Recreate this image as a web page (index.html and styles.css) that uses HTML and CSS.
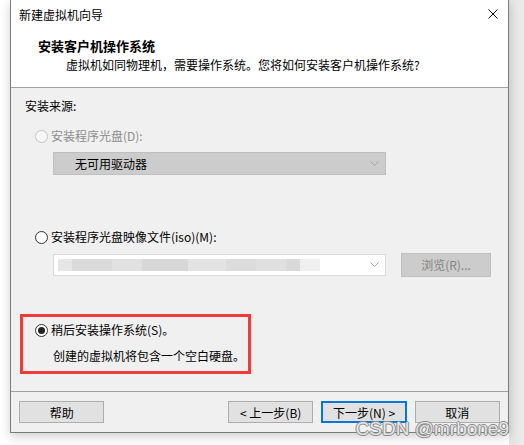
FILE: index.html
```html
<!DOCTYPE html>
<html lang="zh-CN">
<head>
<meta charset="utf-8">
<link rel="stylesheet" href="styles.css">
</head>
<body>
<div class="screen">
  <div class="dialog">
    <div class="titlebar">
      <span class="title">新建虚拟机向导</span>
      <svg class="close" width="10" height="10" viewBox="0 0 10 10"><path d="M0.5 0.5 L9.5 9.5 M9.5 0.5 L0.5 9.5" stroke="#111" stroke-width="1" fill="none"/></svg>
    </div>
    <div class="header">
      <div class="h-title">安装客户机操作系统</div>
      <div class="h-sub">虚拟机如同物理机，需要操作系统。您将如何安装客户机操作系统?</div>
    </div>
    <div class="content">
      <div class="label">安装来源:</div>
      <div class="radio-row disabled r1"><span class="radio"></span><span>安装程序光盘(D):</span></div>
      <div class="combo combo-disabled">
        <span class="combo-text">无可用驱动器</span>
        <svg class="chev" width="9" height="5" viewBox="0 0 9 5"><path d="M0.5 0.5 L4.5 4.5 L8.5 0.5" stroke="#a6a6a6" fill="none"/></svg>
      </div>
      <div class="radio-row r2"><span class="radio"></span><span>安装程序光盘映像文件(iso)(M):</span></div>
      <div class="iso-row">
        <div class="combo combo-iso">
          <div class="blur">
            <span class="b b1"></span><span class="b b2"></span><span class="b b3"></span><span class="b b4"></span><span class="b b5"></span><span class="b b6"></span><span class="b b7"></span><span class="b b8"></span><span class="b b9"></span>
          </div>
          <svg class="chev" width="9" height="5" viewBox="0 0 9 5"><path d="M0.5 0.5 L4.5 4.5 L8.5 0.5" stroke="#a6a6a6" fill="none"/></svg>
        </div>
        <div class="btn-browse">浏览(R)...</div>
      </div>
      <div class="mark">
        <div class="radio-row"><span class="radio checked"></span><span>稍后安装操作系统(S)。</span></div>
        <div class="note">创建的虚拟机将包含一个空白硬盘。</div>
      </div>
    </div>
    <div class="footer">
      <div class="btn">帮助</div>
      <div class="spacer"></div>
      <div class="btn">&lt; 上一步(B)</div>
      <div class="btn primary">下一步(N) &gt;</div>
      <div class="btn">取消</div>
    </div>
  </div>
  <div class="watermark">CSDN @mrbone9</div>
</div>
</body>
</html>
```
FILE: styles.css
```css
html, body {
  margin: 0;
  padding: 0;
  background: #ffffff;
}
body {
  font-family: "Noto Sans CJK SC", "Microsoft YaHei", sans-serif;
  font-size: 12px;
  color: #000;
  width: 524px;
  height: 445px;
  overflow: hidden;
}
.screen {
  position: relative;
  width: 524px;
  height: 445px;
  padding-left: 10px;
  box-sizing: border-box;
  background: linear-gradient(to right, #ffffff 0, #ffffff 509px, #e4e4e4 509px, #ececec 524px);
}
.dialog {
  width: 499px;
  height: 433px;
  box-sizing: border-box;
  border: 1px solid #7a7a7a;
  border-top: none;
  background: #f0f0f0;
  display: flex;
  flex-direction: column;
  box-shadow: 0 4px 10px rgba(0,0,0,0.18);
}
.titlebar {
  height: 29px;
  background: #fff;
  display: flex;
  align-items: center;
  padding-left: 8px;
  padding-right: 10px;
  justify-content: space-between;
}
.title {
  line-height: 16px;
  margin-top: 1px;
}
.close {
  display: block;
  margin-top: -1px;
}
.header {
  background: #fff;
  border-bottom: 1px solid #a0a0a0;
  padding-top: 9px;
  box-sizing: content-box;
  height: 49px;
}
.h-title {
  font-weight: bold;
  font-size: 13px;
  line-height: 16px;
  padding-left: 27px;
}
.h-sub {
  line-height: 16px;
  margin-top: 3px;
  padding-left: 55px;
}
.content {
  flex: 1;
  display: flex;
  flex-direction: column;
  padding-left: 14px;
  border-bottom: 1px solid #a0a0a0;
}
.label {
  margin-top: 10px;
  line-height: 16px;
}
.radio-row {
  display: flex;
  align-items: center;
  line-height: 16px;
  padding-left: 10px;
}
.radio-row.disabled {
  color: #8d8d8d;
}
.r1 { margin-top: 14px; }
.r2 { margin-top: 54px; }
.radio {
  width: 11px;
  height: 11px;
  border: 1px solid #333;
  border-radius: 50%;
  background: #fff;
  margin-right: 3px;
  position: relative;
  flex: none;
}
.disabled .radio {
  border-color: #c4c4c4;
  background: #f7f7f7;
}
.radio.checked::after {
  content: "";
  position: absolute;
  left: 2px;
  top: 2px;
  width: 7px;
  height: 7px;
  border-radius: 50%;
  background: #222;
}
.combo {
  width: 333px;
  height: 23px;
  box-sizing: border-box;
  margin-left: 28px;
  display: flex;
  align-items: center;
  justify-content: space-between;
  padding-right: 6px;
}
.combo-disabled {
  margin-top: 8px;
  background: #cccccc;
  border: 1px solid #bfbfbf;
}
.combo-text {
  padding-left: 21px;
  line-height: 16px;
}
.chev { display: block; }
.iso-row {
  margin-top: 8px;
  display: flex;
  align-items: center;
  height: 23px;
}
.combo-iso {
  height: 22px;
  background: #fff;
  border: 1px solid #d9d9d9;
}
.blur {
  display: flex;
  height: 12px;
  margin-left: 4px;
}
.b { display: block; height: 12px; }
.b1 { width: 14px; background: #e6e6e6; }
.b2 { width: 40px; background: #dadada; }
.b3 { width: 30px; background: #e1e1e1; }
.b4 { width: 46px; background: #d7d7d7; }
.b5 { width: 38px; background: #e3e3e3; }
.b6 { width: 30px; background: #dcdcdc; }
.b7 { width: 30px; background: #e0e0e0; }
.b8 { width: 14px; background: #d9d9d9; }
.b9 { width: 20px; background: #efefef; }
.btn-browse {
  margin-left: 15px;
  width: 90px;
  height: 24px;
  box-sizing: border-box;
  background: #cccccc;
  border: 1px solid #bfbfbf;
  color: #838383;
  display: flex;
  align-items: center;
  justify-content: center;
}
.mark {
  margin-top: 38px;
  margin-left: -5px;
  width: 231px;
  height: 60px;
  box-sizing: border-box;
  border: 3px solid #f23a3a;
  padding-top: 5px;
}
.mark .radio-row {
  padding-left: 12px;
}
.note {
  margin-top: 10px;
  padding-left: 30px;
  line-height: 16px;
}
.footer {
  height: 40px;
  display: flex;
  align-items: flex-start;
  padding-top: 9px;
  padding-left: 8px;
  box-sizing: border-box;
}
.spacer { width: 118px; }
.btn {
  width: 87px;
  height: 22px;
  box-sizing: border-box;
  background: #e1e1e1;
  border: 1px solid #adadad;
  display: flex;
  align-items: center;
  justify-content: center;
  margin-right: 8px;
}
.btn.primary {
  border: 2px solid #0078d7;
}
.watermark {
  position: absolute;
  right: 15px;
  bottom: 5px;
  font-family: "Liberation Sans", Arial, sans-serif;
  font-size: 19px;
  color: rgba(255,255,255,0.8);
  text-shadow: -1px 0 0 #8a8a8a, 1px 0 0 #8a8a8a, 0 -1px 0 #8a8a8a, 0 1px 0 #8a8a8a;
}
```
